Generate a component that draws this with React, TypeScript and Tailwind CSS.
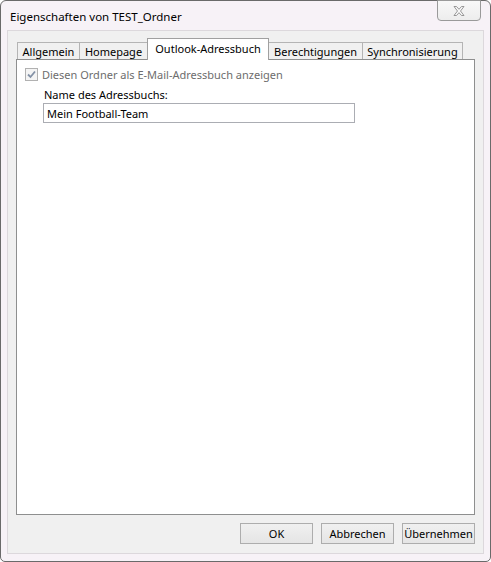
import React from 'react'

const font = { fontFamily: '"Noto Sans", "Liberation Sans", sans-serif' }

const tabs = [
  { label: 'Allgemein', w: 'w-[63px]' },
  { label: 'Homepage', w: 'w-[69px]' },
  { label: 'Outlook-Adressbuch', w: 'w-[122px]', active: true },
  { label: 'Berechtigungen', w: 'w-[95px]' },
  { label: 'Synchronisierung', w: 'w-[101px]' },
]

function Tab({ label, w, active, first }: { label: string; w: string; active?: boolean; first?: boolean }) {
  if (active) {
    return (
      <div
        className={`relative z-10 -mb-px -ml-px flex h-[22px] ${w} items-start justify-center border border-b-0 border-[#a0a0a0] bg-white pt-[4px] text-[11px] leading-none text-black`}
      >
        {label}
      </div>
    )
  }
  return (
    <div
      className={`flex h-[17px] ${w} ${first ? '' : '-ml-px'} items-center justify-center border border-b-0 border-[#b4b4b4] bg-[#f0f0f0] text-[11px] leading-none text-black`}
    >
      {label}
    </div>
  )
}

function Button({ children }: { children: React.ReactNode }) {
  return (
    <button className="flex h-[21px] w-[73px] items-center justify-center border border-[#adadad] bg-gradient-to-b from-[#f0f0f0] to-[#e5e5e5] text-[11px] leading-none text-black">
      {children}
    </button>
  )
}

export default function App() {
  return (
    <div className="h-[562px] w-[491px] bg-white" style={font}>
      <div className="flex h-full w-full flex-col rounded-t-[6px] rounded-b-[5px] border border-[#6a6a6a] bg-[#f7f2f7] px-[6px] pb-[7px]">
        {/* title bar */}
        <div className="relative flex h-[29px] shrink-0 items-start">
          <span className="pl-[3px] pt-[10px] text-[11.5px] leading-none text-black">Eigenschaften von TEST_Ordner</span>
          <div className="absolute right-[3px] top-[-1px] flex h-[21px] w-[44px] items-center justify-center rounded-b-[4px] border border-[#9a9a9a] bg-gradient-to-b from-[#f8f8f8] to-[#ededed]">
            <svg width="12" height="10" viewBox="0 0 12 10">
              <path
                d="M1 0.5 H3.5 L6 3.3 L8.5 0.5 H11 L7.5 5 L11 9.5 H8.5 L6 6.7 L3.5 9.5 H1 L4.5 5 Z"
                fill="#fafafa"
                stroke="#8c8c8c"
                strokeWidth="0.9"
                strokeLinejoin="round"
              />
            </svg>
          </div>
        </div>

        {/* client area */}
        <div className="flex flex-1 flex-col border border-[#dcd8dc] bg-[#f0f0f0]">
          <div className="ml-[9px] mt-[7px] flex h-[21px] items-end">
            {tabs.map((t, i) => (
              <Tab key={t.label} {...t} first={i === 0} />
            ))}
          </div>

          <div className="mx-[8px] flex flex-1 flex-col border border-[#8e8f8f] bg-white pl-[8px] pt-[8px]">
            <label className="flex items-center gap-[4px] text-[11px] leading-none text-[#6d6d6d]">
              <span className="flex h-[13px] w-[13px] items-center justify-center border border-[#b1b1b1] bg-[#f4f4f4]">
                <svg width="9" height="9" viewBox="0 0 9 9">
                  <path d="M1 4.5 L3.5 7 L8 1.5" fill="none" stroke="#8391a6" strokeWidth="1.8" />
                </svg>
              </span>
              Diesen Ordner als E-Mail-Adressbuch anzeigen
            </label>

            <div className="ml-[19px] mt-[8px] text-[11px] leading-none text-black">Name des Adressbuchs:</div>

            <div className="ml-[18px] mt-[3px] flex h-[20px] w-[312px] items-center border border-[#abadb3] bg-white pl-[3px] text-[11px] leading-none text-black">
              Mein Football-Team
            </div>
          </div>

          <div className="mx-[8px] mb-[9px] mt-[8px] flex justify-end gap-[8px]">
            <Button>OK</Button>
            <Button>Abbrechen</Button>
            <Button>Übernehmen</Button>
          </div>
        </div>
      </div>
    </div>
  )
}
